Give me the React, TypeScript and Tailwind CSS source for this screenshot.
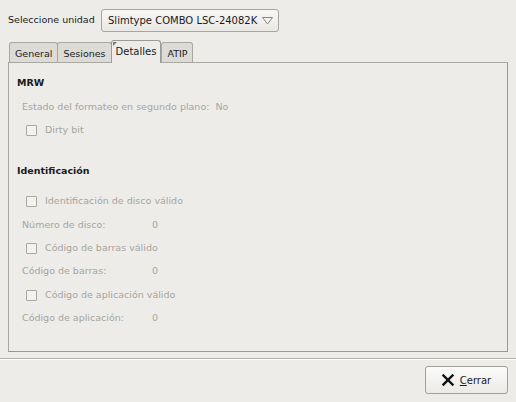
import React from "react";

const FONT = { fontFamily: '"DejaVu Sans", Verdana, sans-serif' };

function Check({ label }: { label: string }) {
  return (
    <div className="flex items-center h-[20px] pl-[17px]">
      <span className="w-[11px] h-[11px] border border-[#a9a7a2] bg-[#f3f2ef] rounded-[1px]" />
      <span className="ml-[8px] text-[#a6a5a0]">{label}</span>
    </div>
  );
}

function Field({ label, value }: { label: string; value: string }) {
  return (
    <div className="flex items-center h-[20px] pl-[13px] text-[#a6a5a0]">
      <span className="w-[130px]">{label}</span>
      <span>{value}</span>
    </div>
  );
}

const TABS = ["General", "Sesiones", "Detalles", "ATIP"];

export default function App() {
  return (
    <div
      className="w-[516px] h-[402px] bg-[#edece9] text-[9.5px] text-[#1a1a1a] flex flex-col overflow-hidden"
      style={FONT}
    >
      {/* Drive selector */}
      <div className="flex items-center pt-[9px] pl-[8px] h-[32px]">
        <span className="w-[93px]">Seleccione unidad</span>
        <div className="w-[178px] h-[23px] border border-[#a7a5a0] rounded-[3px] bg-gradient-to-b from-[#f8f7f5] to-[#e9e8e4] flex items-center pl-[6px] pr-[5px]">
          <span className="flex-1 text-[10px]">Slimtype COMBO LSC-24082K</span>
          <svg width="11" height="8" viewBox="0 0 11 8">
            <path d="M0.5 0.5 L10.5 0.5 L5.5 7 Z" fill="none" stroke="#8a8884" strokeWidth="1" />
          </svg>
        </div>
      </div>

      {/* Tabs */}
      <div className="flex items-end pl-[9px] mt-[8px] h-[22px] relative z-10">
        {TABS.map((t) => {
          const active = t === "Detalles";
          return (
            <div
              key={t}
              className={
                active
                  ? "h-[23px] -mb-px px-[4px] pt-[3px] border border-b-0 border-[#9c9a95] rounded-t-[3px] bg-[#edece9] text-[10px] relative"
                  : "h-[20px] px-[5px] pt-[4px] border border-b-0 border-[#a9a7a2] rounded-t-[3px] bg-[#dddbd6] -mr-px"
              }
            >
              {active && (
                <span className="absolute left-[1px] top-[1px] w-0 h-0 border-t-[4px] border-r-[4px] border-t-[#777] border-r-transparent" />
              )}
              {t}
            </div>
          );
        })}
      </div>

      {/* Panel */}
      <div className="mx-[8px] h-[290px] border border-[#9a9893] border-l-[#a9a7a2] border-t-[#a9a7a2] pt-[10px]">
        <div className="flex items-center h-[20px] pl-[8px] font-bold">MRW</div>
        <div className="mt-[4px] flex items-center h-[20px] pl-[13px] text-[#a6a5a0]">
          Estado del formateo en segundo plano:&nbsp; No
        </div>
        <div className="mt-[3px]">
          <Check label="Dirty bit" />
        </div>
        <div className="mt-[21px] flex items-center h-[20px] pl-[8px] font-bold">Identificación</div>
        <div className="mt-[10px]">
          <Check label="Identificación de disco válido" />
        </div>
        <div className="mt-[4px]">
          <Field label="Número de disco:" value="0" />
        </div>
        <div className="mt-[3px]">
          <Check label="Código de barras válido" />
        </div>
        <div className="mt-[3px]">
          <Field label="Código de barras:" value="0" />
        </div>
        <div className="mt-[4px]">
          <Check label="Código de aplicación válido" />
        </div>
        <div className="mt-[3px]">
          <Field label="Código de aplicación:" value="0" />
        </div>
      </div>

      {/* Separator */}
      <div className="mt-[6px] h-[2px] border-t border-[#b3b1ac] border-b border-b-white" />

      {/* Buttons */}
      <div className="flex justify-end pr-[8px] mt-[6px]">
        <button className="w-[83px] h-[28px] border border-[#a2a09b] rounded-[3px] bg-gradient-to-b from-[#fbfbfa] to-[#ebeae7] flex items-center justify-center gap-[6px] text-[10px]">
          <svg width="12" height="12" viewBox="0 0 12 12">
            <path d="M1.5 1.5 L10.5 10.5 M10.5 1.5 L1.5 10.5" stroke="#111" strokeWidth="2.4" strokeLinecap="square" />
          </svg>
          <span>
            <span className="underline">C</span>errar
          </span>
        </button>
      </div>
    </div>
  );
}
